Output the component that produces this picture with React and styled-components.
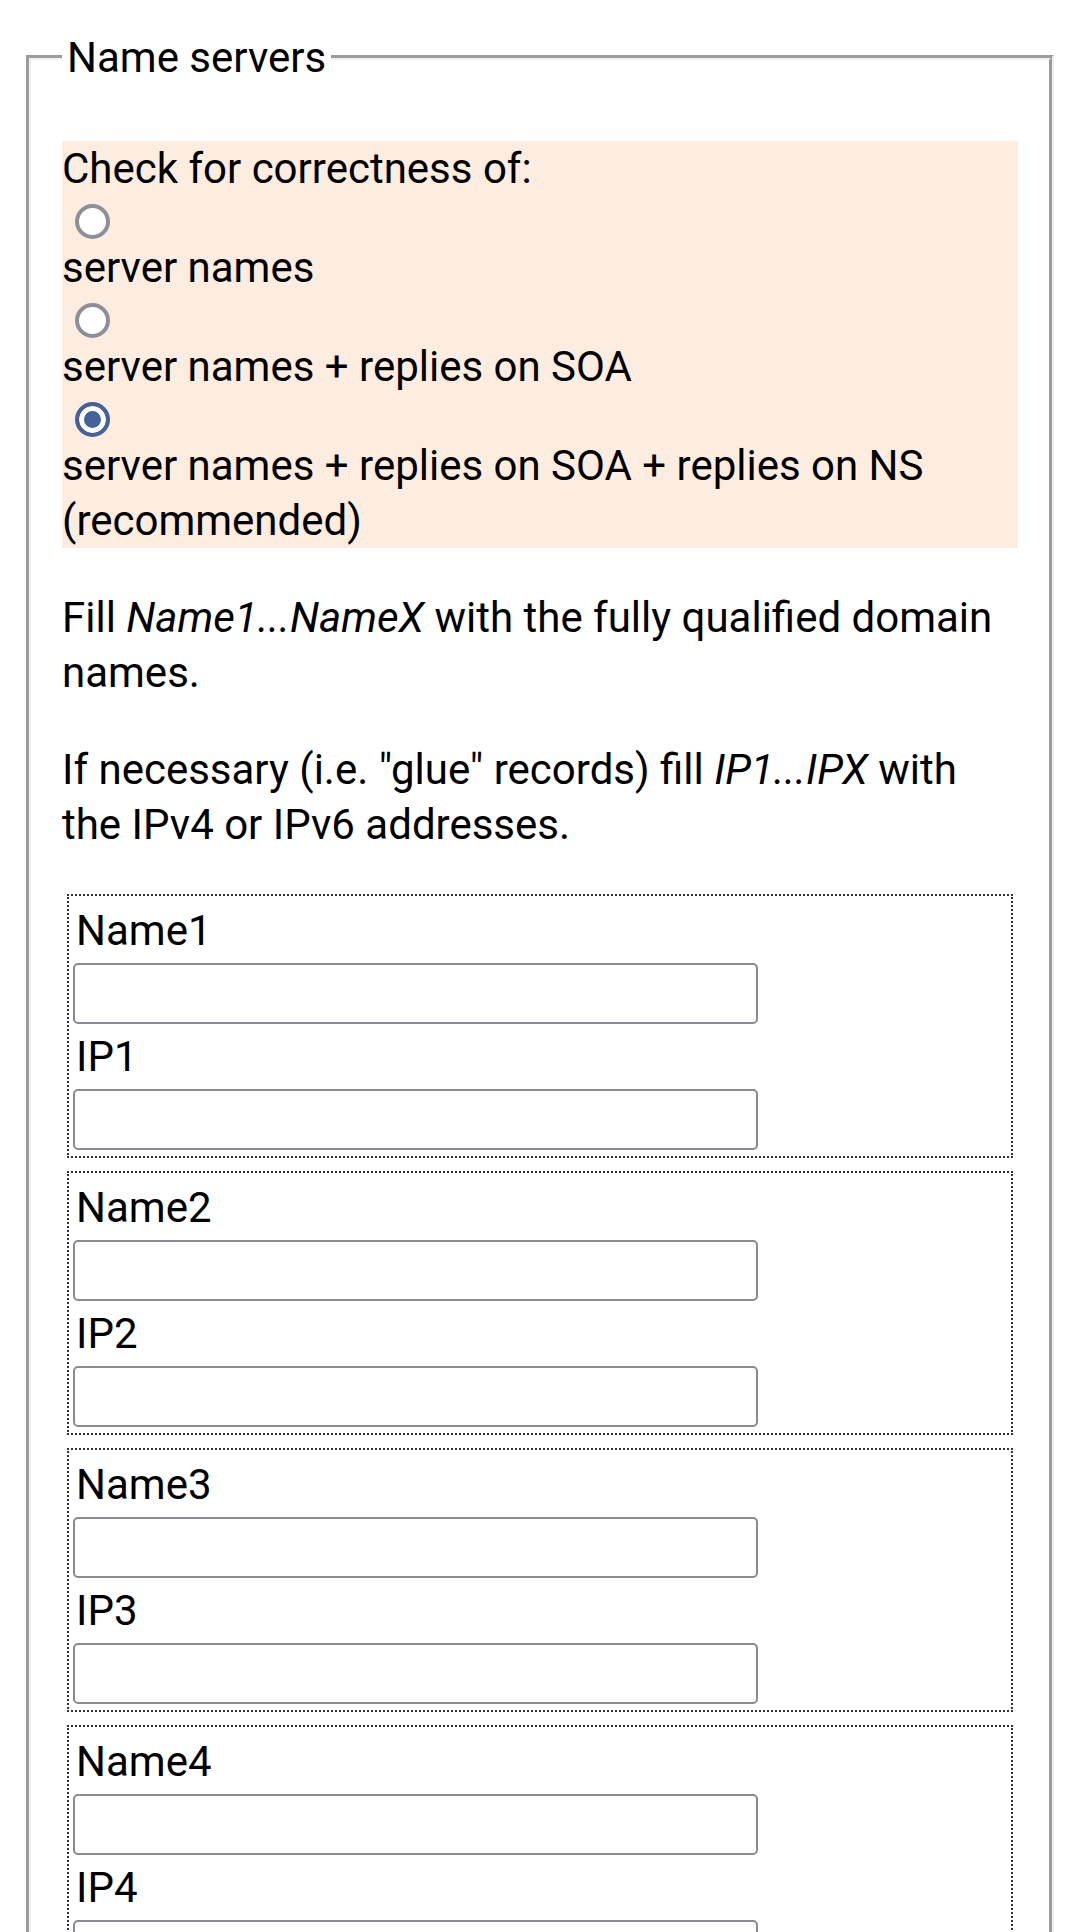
import React from "react";
import styled, { createGlobalStyle } from "styled-components";

const GlobalStyle = createGlobalStyle`
  html {
    overflow: hidden;
  }
  body {
    margin: 0;
    background: #fff;
    color: #000;
    font-family: Roboto, "Noto Sans", sans-serif;
    font-size: 42px;
    line-height: 55px;
  }
`;

const Page = styled.div`
  padding: 30px 26px 0;
`;

const Fieldset = styled.fieldset`
  margin: 0;
  min-width: 0;
  padding: 14px 31px 16px;
  border: 5px groove #f0f0f0;
`;

const Legend = styled.legend`
  padding: 0 5px;
  line-height: 55px;
`;

const Choices = styled.div`
  margin: 42px 0;
  background: #fdece0;
`;

const Line = styled.div``;

const Option = styled.label`
  display: block;
`;

const Radio = styled.input.attrs({ type: "radio" })`
  appearance: none;
  display: block;
  box-sizing: border-box;
  width: 35px;
  height: 35px;
  margin: 8px 0 1px 13px;
  border: 4px solid #8e8e98;
  border-radius: 50%;
  background: #fff;

  &:checked {
    border-color: #46609a;
    background: #46609a;
    box-shadow: inset 0 0 0 5px #fff;
  }
`;

const Text = styled.p`
  margin: 42px 0;
`;

const Hosts = styled.div`
  display: flex;
  flex-direction: column;
  gap: 13px;
  margin: 0 5px;
`;

const HostBox = styled.div`
  padding: 7px 4px 1px;
  border: 2px dotted #333;
`;

const Label = styled.label`
  display: block;
  padding-left: 3px;
  line-height: 55px;
`;

const Field = styled.input`
  display: block;
  box-sizing: border-box;
  width: 685px;
  height: 61px;
  margin: 5px 0;
  padding: 0 8px;
  border: 2px solid #8a8a94;
  border-radius: 5px;
  background: #fff;
  font: inherit;
`;

const options = [
  "server names",
  "server names + replies on SOA",
  "server names + replies on SOA + replies on NS (recommended)"
];

const hosts = [1, 2, 3, 4];

export default function App() {
  return (
    <Page>
      <GlobalStyle />
      <Fieldset>
        <Legend>Name servers</Legend>
        <Choices>
          <Line>Check for correctness of:</Line>
          {options.map((opt, i) => (
            <div key={opt}>
              <Radio name="check" id={`check${i}`} defaultChecked={i === 2} />
              <Option htmlFor={`check${i}`}>{opt}</Option>
            </div>
          ))}
        </Choices>
        <Text>
          Fill <i>Name1...NameX</i> with the fully qualified domain names.
        </Text>
        <Text>
          If necessary (i.e. "glue" records) fill <i>IP1...IPX</i> with the
          IPv4 or IPv6 addresses.
        </Text>
        <Hosts>
          {hosts.map(n => (
            <HostBox key={n}>
              <Label htmlFor={`name${n}`}>Name{n}</Label>
              <Field id={`name${n}`} type="text" />
              <Label htmlFor={`ip${n}`}>IP{n}</Label>
              <Field id={`ip${n}`} type="text" />
            </HostBox>
          ))}
        </Hosts>
      </Fieldset>
    </Page>
  );
}
